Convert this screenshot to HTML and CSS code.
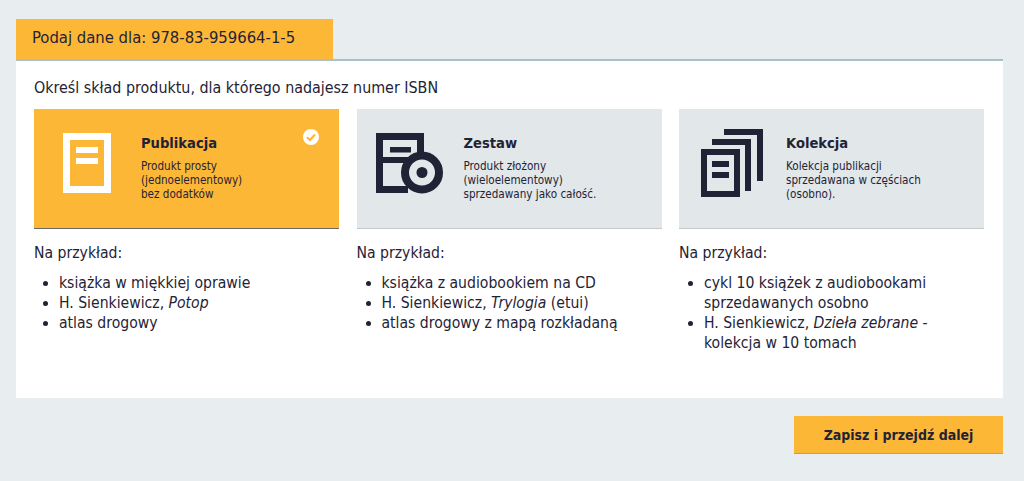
FILE: index.html
```html
<!DOCTYPE html>
<html lang="pl">
<head>
    <meta charset="UTF-8">
    <title>Podaj dane</title>
    <link rel="stylesheet" href="styles.css">
</head>
<body>
    <div class="tab">Podaj dane dla: 978-83-959664-1-5</div>

    <div class="panel">
        <p class="lead">Określ skład produktu, dla którego nadajesz numer ISBN</p>

        <div class="columns">
            <div class="column">
                <div class="card active">
                    <svg class="card-icon" width="48" height="60" viewBox="0 0 48 60">
                        <path fill="#fff" fill-rule="evenodd" d="M0 0H48V60H0ZM7 7V53H41V7Z"/>
                        <path fill="#fff" d="M13 14H35V20H13ZM13 25H35V31H13Z"/>
                    </svg>
                    <div class="card-text">
                        <h3>Publikacja</h3>
                        <p>Produkt prosty<br>(jednoelementowy)<br>bez dodatków</p>
                    </div>
                    <svg class="check" width="16" height="16" viewBox="0 0 16 16">
                        <circle cx="8" cy="8" r="8" fill="#fff"/>
                        <path fill="none" stroke="#fdb737" stroke-width="2" d="M4 8.2L7 11L12 5.5"/>
                    </svg>
                </div>
                <p class="example">Na przykład:</p>
                <ul>
                    <li>książka w miękkiej oprawie</li>
                    <li>H. Sienkiewicz, <em>Potop</em></li>
                    <li>atlas drogowy</li>
                </ul>
            </div>

            <div class="column">
                <div class="card">
                    <svg class="card-icon" width="68" height="61" viewBox="0 0 68 61">
                        <path fill="#1f2335" d="M0 0H48V20H41V7H7V53H32V60H0Z"/>
                        <path fill="#1f2335" d="M14 14H35V19.500H14ZM7 24H36V30H7Z"/>
                        <circle cx="46" cy="39.500" r="17" fill="none" stroke="#1f2335" stroke-width="8"/>
                        <circle cx="46" cy="39.500" r="5.500" fill="#1f2335"/>
                    </svg>
                    <div class="card-text">
                        <h3>Zestaw</h3>
                        <p>Produkt złożony<br>(wieloelementowy)<br>sprzedawany jako całość.</p>
                    </div>
                </div>
                <p class="example">Na przykład:</p>
                <ul>
                    <li>książka z audiobookiem na CD</li>
                    <li>H. Sienkiewicz, <em>Trylogia</em> (etui)</li>
                    <li>atlas drogowy z mapą rozkładaną</li>
                </ul>
            </div>

            <div class="column">
                <div class="card stack">
                    <svg class="card-icon" width="62" height="70" viewBox="0 0 62 70">
                        <path fill="#1f2335" d="M23 0H62V52H56V6H23ZM11 10H50V62H44V16H11Z"/>
                        <path fill="#1f2335" fill-rule="evenodd" d="M0 20H39V68H0ZM6 26V62H33V26Z"/>
                        <path fill="#1f2335" d="M11 32H28V38H11ZM11 43H28V49H11Z"/>
                    </svg>
                    <div class="card-text">
                        <h3>Kolekcja</h3>
                        <p>Kolekcja publikacji<br>sprzedawana w częściach<br>(osobno).</p>
                    </div>
                </div>
                <p class="example">Na przykład:</p>
                <ul>
                    <li>cykl 10 książek z audiobookami sprzedawanych osobno</li>
                    <li>H. Sienkiewicz, <em>Dzieła zebrane</em> - kolekcja w 10 tomach</li>
                </ul>
            </div>
        </div>
    </div>

    <div class="actions">
        <button type="button">Zapisz i przejdź dalej</button>
    </div>
</body>
</html>
```

FILE: styles.css
```css
:root {
    --orange: #fdb737;
    --navy: #1f2335;
    --page: #e8edf0;
    --card: #e2e7ea;
}

* {
    margin: 0;
    padding: 0;
    box-sizing: border-box;
    font-family: 'DejaVu Sans Condensed', 'DejaVu Sans', Verdana, sans-serif;
    font-stretch: condensed;
}

body {
    background-color: var(--page);
    color: var(--navy);
    padding: 19px 21px 0 16px;
    font-size: 15.6px;
}

.tab {
    width: 317px;
    height: 40px;
    padding-left: 16px;
    line-height: 38px;
    background-color: var(--orange);
    font-size: 16.5px;
}

.panel {
    height: 339px;
    padding: 17px 19px 0 18px;
    background-color: white;
    border-top: 2px solid #a9c0c9;
}

.lead {
    font-size: 15.9px;
    line-height: 20px;
    margin-bottom: 11px;
}

.columns {
    display: grid;
    grid-template-columns: repeat(3, 1fr);
    column-gap: 17.5px;
}

.card {
    position: relative;
    display: flex;
    height: 120px;
    background-color: var(--card);
    border-bottom: 1px solid #c4c8cb;
}

.card.active {
    background-color: var(--orange);
    border-bottom-color: #6b6a62;
}

.card-icon {
    flex: none;
    margin: 24px 0 0 19px;
}

.active .card-icon {
    margin-left: 29px;
}

.stack .card-icon {
    margin: 20px 0 0 22px;
}

.card-text {
    position: absolute;
    left: 107px;
    top: 24px;
}

.card-text h3 {
    font-size: 14.6px;
    line-height: 20px;
    font-weight: bold;
    margin-bottom: 6px;
}

.card-text p {
    font-size: 11.6px;
    line-height: 14px;
}

.check {
    position: absolute;
    top: 20px;
    right: 20px;
}

.example {
    margin-top: 14px;
    line-height: 20px;
}

ul {
    margin-top: 10px;
    padding-left: 25px;
    list-style: disc;
}

li {
    line-height: 20px;
}

.actions {
    display: flex;
    justify-content: flex-end;
    margin-top: 18px;
}

button {
    width: 209px;
    height: 38px;
    background-color: var(--orange);
    border: none;
    border-bottom: 1px solid #a8a293;
    color: var(--navy);
    font-size: 14px;
    font-weight: bold;
}
```
